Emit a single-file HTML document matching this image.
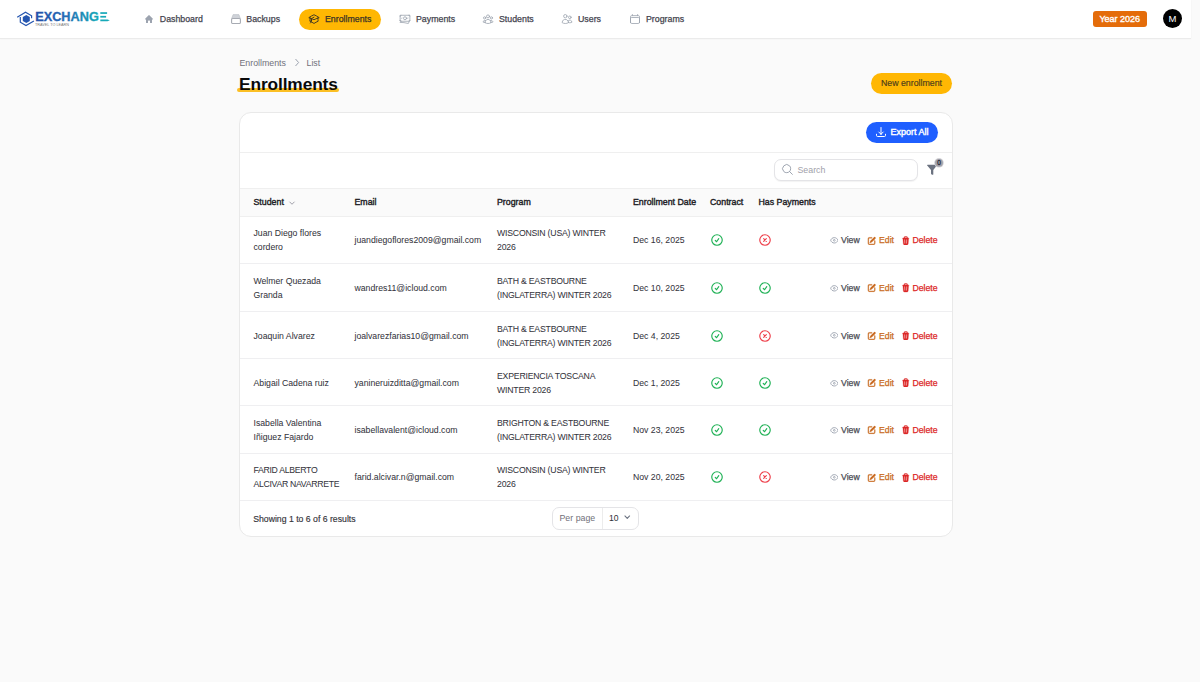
<!DOCTYPE html>
<html><head><meta charset="utf-8">
<style>
*{box-sizing:border-box;margin:0;padding:0}
html,body{width:1200px;height:682px;overflow:hidden}
body{background:#fafafa;font-family:"Liberation Sans",sans-serif;position:relative;color:#18181b}
.abs{position:absolute}
.ic{position:absolute}
#top{position:absolute;left:0;top:0;width:1191px;height:39px;background:#fff;border-bottom:1px solid #ebebeb;box-shadow:0 0 2px rgba(0,0,0,0.04)}
.nav{position:absolute;top:8px;height:22px;font-size:8.8px;font-weight:normal;color:#45454f;white-space:nowrap;line-height:22px;-webkit-text-stroke:0.25px currentColor}
.nt{position:absolute;top:0}
.nav svg{position:absolute}
.card{position:absolute;left:239px;top:112px;width:714px;height:425px;background:#fff;border:1px solid #e9e9e9;border-radius:12px;overflow:hidden}
.hl{position:absolute;left:240px;width:712px;height:1px;background:#efefef}
.hl2{position:absolute;left:240px;width:712px;height:1px;background:#efeff1}
.t{position:absolute;white-space:nowrap;font-size:9px;color:#3f3f46}
.th{position:absolute;top:188px;height:28px;line-height:28px;white-space:nowrap;font-size:8.8px;font-weight:normal;color:#202024;-webkit-text-stroke:0.38px currentColor}
.td{position:absolute;display:flex;flex-direction:column;justify-content:center;white-space:nowrap;font-size:8.7px;line-height:14px;color:#34343c;-webkit-text-stroke:0.04px currentColor}
.act{position:absolute;display:flex;align-items:center;white-space:nowrap;font-size:8.7px;font-weight:normal;color:#52525b;-webkit-text-stroke:0.25px currentColor}
</style></head><body>
<div id="top">
  <!-- logo -->
  <svg class="abs" style="left:16px;top:11px" width="19" height="16" viewBox="0 0 19 16">
    <path d="M1.2 6.3 L9.5 1.3 L15.6 4.8 L15.6 7.3" fill="none" stroke="#2556b0" stroke-width="1.2"/>
    <path d="M4.3 6 L4.3 11.2 L10 14.6 L17.9 9.9" fill="none" stroke="#2556b0" stroke-width="1.2"/>
    <polygon points="10.3,3.9 13.8,5.9 13.8,9.9 10.3,11.9 6.8,9.9 6.8,5.9" fill="#2556b0"/>
  </svg>
  <svg class="abs" style="left:34px;top:10px" width="80" height="18" viewBox="0 0 80 18">
    <defs><linearGradient id="lg" x1="0" x2="1" y1="0" y2="0"><stop offset="0" stop-color="#2350aa"/><stop offset="0.45" stop-color="#2669b4"/><stop offset="1" stop-color="#17aab8"/></linearGradient></defs>
    <text x="1.2" y="11.2" font-family="Liberation Sans" font-weight="bold" font-size="12.4" fill="url(#lg)" stroke="url(#lg)" stroke-width="0.3" textLength="63.6" lengthAdjust="spacingAndGlyphs">EXCHANG</text>
    <rect x="66.3" y="2.2" width="6.8" height="1.7" fill="#17a9b8"/>
    <rect x="66.3" y="5.9" width="5.8" height="1.7" fill="#17a9b8"/>
    <path d="M66.3 9.5 H73.5 L75.8 10.35 L73.5 11.2 H66.3 Z" fill="#17a9b8"/>
    <text x="1" y="15.6" font-family="Liberation Sans" font-size="3" fill="#777" textLength="34" lengthAdjust="spacingAndGlyphs">TRAVEL TO LEARN</text>
  </svg>

  <div class="nav" style="left:144px"><svg style="left:-0.5px;top:6.3px" width="10" height="10" viewBox="0 0 20 20"><path d="M9.293 2.293a1 1 0 011.414 0l7 7A1 1 0 0117 11h-1v6a1 1 0 01-1 1h-2a1 1 0 01-1-1v-3a1 1 0 00-1-1H9a1 1 0 00-1 1v3a1 1 0 01-1 1H5a1 1 0 01-1-1v-6H3a1 1 0 01-.707-1.707l7-7z" fill="#9ca3af"/></svg><span class="nt" style="left:15.8px">Dashboard</span></div>
  <div class="nav" style="left:231px"><svg style="left:0;top:6px" width="10" height="10" viewBox="0 0 10 10"><path d="M2.1 0.6 H7.9 L9.4 4.6 H0.6 Z" fill="#cfd2d8" stroke="#b9bdc5" stroke-width="0.6" stroke-linejoin="round"/><rect x="0.6" y="4.5" width="8.8" height="5" rx="1.1" fill="#fff" stroke="#a7abb3" stroke-width="1.1"/></svg><span class="nt" style="left:15.3px">Backups</span></div>
  <div class="nav" style="left:299px;width:82px;height:21.5px;top:8.5px;line-height:21.5px;background:#ffb703;border-radius:11px;color:#3a3326"><svg style="left:9px;top:4.5px" width="12" height="12" viewBox="0 0 24 24"><path d="M4.26 10.147a60.438 60.438 0 0 0-.491 6.347A48.62 48.62 0 0 1 12 20.904a48.62 48.62 0 0 1 8.232-4.41 60.46 60.46 0 0 0-.491-6.347m-15.482 0a50.636 50.636 0 0 0-2.658-.813A59.906 59.906 0 0 1 12 3.493a59.903 59.903 0 0 1 10.399 5.84c-.896.248-1.783.52-2.658.814m-15.482 0A50.717 50.717 0 0 1 12 13.489a50.702 50.702 0 0 1 7.74-3.342M6.75 15a.75.75 0 1 0 0-1.5.75.75 0 0 0 0 1.5Zm0 0v-3.675A55.378 55.378 0 0 1 12 8.443m-7.007 11.55A5.981 5.981 0 0 0 6.75 15.75v-1.5" fill="none" stroke="#3a3326" stroke-width="1.8" stroke-linecap="round" stroke-linejoin="round"/></svg><span class="nt" style="left:26px">Enrollments</span></div>
  <div class="nav" style="left:400px"><svg style="left:-1px;top:5.3px" width="12" height="12" viewBox="0 0 24 24"><path d="M2.25 18.75a60.07 60.07 0 0 1 15.797 2.101c.727.198 1.453-.342 1.453-1.096V18.75M3.75 4.5v.75A.75.75 0 0 1 3 6h-.75m0 0v-.375c0-.621.504-1.125 1.125-1.125H20.25M2.25 6v9m18-10.5v.75c0 .414.336.75.75.75h.75m-1.5-1.5h.375c.621 0 1.125.504 1.125 1.125v9.750c0 .621-.504 1.125-1.125 1.125h-.375m1.5-1.5H21a.75.75 0 0 0-.75.75v.75m0 0H3.75m0 0h-.375a1.125 1.125 0 0 1-1.125-1.125V15m1.5 1.5v-.75A.75.75 0 0 0 3 15h-.75M15 10.5a3 3 0 1 1-6 0 3 3 0 0 1 6 0Zm3 0h.008v.008H18V10.5Zm-12 0h.008v.008H6V10.5Z" fill="none" stroke="#9ca3af" stroke-width="1.6" stroke-linecap="round" stroke-linejoin="round"/></svg><span class="nt" style="left:16px">Payments</span></div>
  <div class="nav" style="left:483px"><svg style="left:-1px;top:5.3px" width="12" height="12" viewBox="0 0 24 24"><path d="M18 18.72a9.094 9.094 0 0 0 3.741-.479 3 3 0 0 0-4.682-2.72m.94 3.198.001.031c0 .225-.012.447-.037.666A11.944 11.944 0 0 1 12 21c-2.17 0-4.207-.576-5.963-1.584A6.062 6.062 0 0 1 6 18.719m12 0a5.971 5.971 0 0 0-.941-3.197m0 0A5.995 5.995 0 0 0 12 12.75a5.995 5.995 0 0 0-5.058 2.772m0 0a3 3 0 0 0-4.681 2.72 8.986 8.986 0 0 0 3.74.477m.94-3.197a5.971 5.971 0 0 0-.94 3.197M15 6.75a3 3 0 1 1-6 0 3 3 0 0 1 6 0Zm6 3a2.25 2.25 0 1 1-4.5 0 2.25 2.25 0 0 1 4.5 0Zm-13.5 0a2.25 2.25 0 1 1-4.5 0 2.25 2.25 0 0 1 4.5 0Z" fill="none" stroke="#9ca3af" stroke-width="1.6" stroke-linecap="round" stroke-linejoin="round"/></svg><span class="nt" style="left:16px">Students</span></div>
  <div class="nav" style="left:562px"><svg style="left:-1px;top:5.3px" width="12" height="12" viewBox="0 0 24 24"><path d="M15 19.128a9.38 9.38 0 0 0 2.625.372 9.337 9.337 0 0 0 4.121-.952 4.125 4.125 0 0 0-7.533-2.493M15 19.128v-.003c0-1.113-.285-2.16-.786-3.07M15 19.128v.106A12.318 12.318 0 0 1 8.624 21c-2.331 0-4.512-.645-6.374-1.766l-.001-.109a6.375 6.375 0 0 1 11.964-3.07M12 6.375a3.375 3.375 0 1 1-6.75 0 3.375 3.375 0 0 1 6.75 0Zm8.25 2.25a2.625 2.625 0 1 1-5.25 0 2.625 2.625 0 0 1 5.250 0Z" fill="none" stroke="#9ca3af" stroke-width="1.6" stroke-linecap="round" stroke-linejoin="round"/></svg><span class="nt" style="left:16px">Users</span></div>
  <div class="nav" style="left:630px"><svg style="left:-1px;top:5.3px" width="12" height="12" viewBox="0 0 24 24"><path d="M6.75 3v2.25M17.25 3v2.25M3 18.75V7.5a2.25 2.25 0 0 1 2.25-2.25h13.5A2.25 2.25 0 0 1 21 7.5v11.25m-18 0A2.25 2.25 0 0 0 5.25 21h13.5A2.25 2.25 0 0 0 21 18.75m-18 0v-7.5A2.25 2.25 0 0 1 5.25 9h13.5A2.25 2.25 0 0 1 21 11.25v7.5" fill="none" stroke="#9ca3af" stroke-width="1.6" stroke-linecap="round" stroke-linejoin="round"/></svg><span class="nt" style="left:16px">Programs</span></div>

  <div class="abs" style="left:1092.5px;top:11px;width:54.5px;height:16.3px;background:#e46c0a;border-radius:3px;color:#fff;font-size:9px;font-weight:normal;-webkit-text-stroke:0.35px #fff;text-align:center;line-height:16.3px">Year 2026</div>
  <div class="abs" style="left:1163px;top:9.2px;width:19px;height:19px;background:#000;border-radius:50%;color:#fff;font-size:9.5px;text-align:center;line-height:19.5px">M</div>
</div>

<!-- breadcrumbs -->
<div class="t" style="left:239.5px;top:56.5px;font-size:8.8px;color:#71717a;line-height:12px">Enrollments</div>
<svg class="abs" style="left:293.5px;top:58px" width="6" height="9" viewBox="0 0 6 9"><path d="M1.5 1 L4.6 4.5 L1.5 8" fill="none" stroke="#9ca3af" stroke-width="1"/></svg>
<div class="t" style="left:306.5px;top:56.5px;font-size:8.8px;color:#71717a;line-height:12px">List</div>
<div class="abs" style="left:237px;top:88.3px;width:102px;height:3.4px;background:#fbbf24;border-radius:2px"></div>
<div class="abs" style="left:239px;top:72.8px;font-size:17.3px;line-height:22px;font-weight:bold;color:#09090b;white-space:nowrap;letter-spacing:-0.1px">Enrollments</div>

<div class="abs" style="left:871px;top:72.5px;width:81px;height:21.5px;background:#ffb703;border-radius:11px;font-size:8.8px;color:#4a3c1c;-webkit-text-stroke:0.15px currentColor;text-align:center;line-height:21.5px">New enrollment</div>

<div class="card"></div>
<div class="abs" style="left:866px;top:121.5px;width:72px;height:21.3px;background:#1f5fff;border-radius:11px;color:#fff;font-size:9px;font-weight:normal;-webkit-text-stroke:0.4px #fff;line-height:21.3px;padding-left:24.5px">Export All</div>
<svg class="abs" style="left:874.8px;top:126.3px" width="12" height="12" viewBox="0 0 24 24"><path d="M3 16.5v2.25A2.25 2.25 0 0 0 5.25 21h13.5A2.25 2.25 0 0 0 21 18.75V16.5M16.5 12 12 16.5m0 0L7.5 12m4.5 4.5V3" fill="none" stroke="#fff" stroke-width="2" stroke-linecap="round" stroke-linejoin="round"/></svg>
<div class="hl" style="top:152px"></div>
<div class="abs" style="left:774px;top:159px;width:143.5px;height:22.3px;border:1px solid #e4e4e7;border-radius:7px;background:#fff;box-shadow:0 1px 1px rgba(0,0,0,0.05)"></div>
<svg class="abs" style="left:780.5px;top:163.3px" width="13" height="13" viewBox="0 0 24 24"><path d="m21 21-5.197-5.197m0 0A7.5 7.5 0 1 0 5.196 5.196a7.5 7.5 0 0 0 10.607 10.607Z" fill="none" stroke="#9ca3af" stroke-width="1.8" stroke-linecap="round" stroke-linejoin="round"/></svg>
<div class="t" style="left:797.5px;top:164px;font-size:8.8px;line-height:12px;color:#a1a1aa">Search</div>
<svg class="abs" style="left:925px;top:156px" width="22" height="22" viewBox="0 0 22 22"><path d="M2 9.3 Q2 8.8 2.6 8.8 H11.4 Q12 8.8 12 9.3 L8.3 14 L8.3 18.2 Q8.3 19 7.3 18.8 L6.6 18.5 Q6 18.2 6 17.5 L6 14 Z" fill="#6b7280"/><circle cx="14" cy="6.8" r="4.8" fill="#d4d4d8"/><circle cx="14" cy="6.8" r="3.9" fill="#a1a1aa"/><text x="14" y="9.1" text-anchor="middle" font-family="Liberation Sans" font-size="6.4" font-weight="normal" stroke="#1f2937" stroke-width="0.3" fill="#1f2937">0</text></svg>
<div class="hl" style="top:187.5px"></div>
<div class="abs" style="left:240px;top:188.5px;width:712px;height:27.5px;background:#fafafa"></div>
<div class="hl" style="top:215.5px"></div>

<div class="th" style="left:253.5px">Student</div>
<svg class="abs" style="left:287.3px;top:197.6px" width="10" height="10" viewBox="0 0 20 20"><path d="M5.5 8 L10 12.5 L14.5 8" fill="none" stroke="#a1a1aa" stroke-width="2" stroke-linecap="round" stroke-linejoin="round"/></svg>
<div class="th" style="left:354.5px">Email</div>
<div class="th" style="left:497px">Program</div>
<div class="th" style="left:633px">Enrollment Date</div>
<div class="th" style="left:710px">Contract</div>
<div class="th" style="left:758.5px">Has Payments</div>

<div class="hl2" style="top:263.30px"></div>
<div class="td" style="left:253.5px;top:216.5px;height:47.80000000000001px">Juan Diego flores<br>cordero</div>
<div class="td" style="left:354.5px;top:216.5px;height:47.80000000000001px">juandiegoflores2009@gmail.com</div>
<div class="td" style="left:497px;top:216.5px;letter-spacing:-0.2px;height:47.80000000000001px">WISCONSIN (USA) WINTER<br>2026</div>
<div class="td" style="left:633px;top:216.5px;height:47.80000000000001px">Dec 16, 2025</div>
<svg class="ic" style="left:709.8px;top:233.40px" width="14" height="14" viewBox="0 0 24 24"><path d="M9 12.75 11.25 15 15 9.75M21 12a9 9 0 1 1-18 0 9 9 0 0 1 18 0Z" fill="none" stroke="#1fb155" stroke-width="2" stroke-linecap="round" stroke-linejoin="round"/></svg>
<svg class="ic" style="left:758.3px;top:233.40px" width="14" height="14" viewBox="0 0 24 24"><path d="m9.75 9.75 4.5 4.5m0-4.5-4.5 4.5M21 12a9 9 0 1 1-18 0 9 9 0 0 1 18 0Z" fill="none" stroke="#ee3f4a" stroke-width="2" stroke-linecap="round" stroke-linejoin="round"/></svg>
<svg class="ic" style="left:829.7px;top:236.20px" width="8.6" height="8.6" viewBox="0 0 24 24"><path d="M2.036 12.322a1.012 1.012 0 0 1 0-.639C3.423 7.51 7.36 4.5 12 4.5c4.638 0 8.573 3.007 9.963 7.178.07.207.07.431 0 .639C20.577 16.49 16.64 19.5 12 19.5c-4.638 0-8.573-3.007-9.963-7.178Z" fill="none" stroke="#9ca3af" stroke-width="2.6"/><circle cx="12" cy="12" r="2.4" fill="none" stroke="#9ca3af" stroke-width="2.4"/></svg>
<div class="act" style="left:841px;top:216.5px;height:47.80000000000001px;color:#4b4b53">View</div>
<svg class="ic" style="left:867.2px;top:235.50px" width="9.6" height="9.6" viewBox="0 0 20 20"><path d="M5.433 13.917l1.262-3.155A4 4 0 017.58 9.42l6.92-6.918a2.121 2.121 0 013 3l-6.92 6.918c-.383.383-.84.685-1.343.886l-3.154 1.262a.5.5 0 01-.65-.65z" fill="#c96b22"/><path d="M3.5 5.75c0-.69.56-1.25 1.25-1.25H10A.75.75 0 0010 3H4.75A2.75 2.75 0 002 5.75v9.5A2.75 2.75 0 004.75 18h9.5A2.75 2.75 0 0017 15.250V10a.75.75 0 00-1.5 0v5.25c0 .69-.56 1.25-1.25 1.25h-9.5c-.69 0-1.25-.56-1.25-1.25v-9.5z" fill="#c96b22" stroke="#c96b22" stroke-width="0.8"/></svg>
<div class="act" style="left:879px;top:216.5px;height:47.80000000000001px;color:#c96b22">Edit</div>
<svg class="ic" style="left:901.3px;top:235.60px" width="9.5" height="9.5" viewBox="0 0 20 20"><path fill="#dc2626" stroke="#dc2626" stroke-width="0.6" fill-rule="evenodd" d="M8.75 1A2.75 2.75 0 006 3.75v.443c-.795.077-1.584.176-2.365.298a.75.75 0 10.23 1.482l.149-.022.841 10.518A2.75 2.75 0 007.596 19h4.807a2.75 2.75 0 002.742-2.53l.841-10.52.149.023a.75.75 0 00.23-1.482A41.03 41.03 0 0014 4.193V3.75A2.75 2.75 0 0011.25 1h-2.5zM10 4c.84 0 1.673.025 2.5.075V3.75c0-.69-.56-1.25-1.25-1.25h-2.5c-.69 0-1.25.56-1.25 1.25v.325C8.327 4.025 9.16 4 10 4zM8.58 7.72a.75.75 0 00-1.5.06l.3 7.5a.75.75 0 101.5-.06l-.3-7.5zm4.34.06a.75.75 0 10-1.5-.06l-.3 7.5a.75.75 0 101.5.06l.3-7.5z" clip-rule="evenodd"/></svg>
<div class="act" style="left:912.5px;top:216.5px;height:47.80000000000001px;color:#dc2626">Delete</div>
<div class="hl2" style="top:311.00px"></div>
<div class="td" style="left:253.5px;top:264.3px;height:47.69999999999999px">Welmer Quezada<br>Granda</div>
<div class="td" style="left:354.5px;top:264.3px;height:47.69999999999999px">wandres11@icloud.com</div>
<div class="td" style="left:497px;top:264.3px;letter-spacing:-0.2px;height:47.69999999999999px">BATH &amp; EASTBOURNE<br>(INGLATERRA) WINTER 2026</div>
<div class="td" style="left:633px;top:264.3px;height:47.69999999999999px">Dec 10, 2025</div>
<svg class="ic" style="left:709.8px;top:281.15px" width="14" height="14" viewBox="0 0 24 24"><path d="M9 12.75 11.25 15 15 9.75M21 12a9 9 0 1 1-18 0 9 9 0 0 1 18 0Z" fill="none" stroke="#1fb155" stroke-width="2" stroke-linecap="round" stroke-linejoin="round"/></svg>
<svg class="ic" style="left:758.3px;top:281.15px" width="14" height="14" viewBox="0 0 24 24"><path d="M9 12.75 11.25 15 15 9.75M21 12a9 9 0 1 1-18 0 9 9 0 0 1 18 0Z" fill="none" stroke="#1fb155" stroke-width="2" stroke-linecap="round" stroke-linejoin="round"/></svg>
<svg class="ic" style="left:829.7px;top:283.95px" width="8.6" height="8.6" viewBox="0 0 24 24"><path d="M2.036 12.322a1.012 1.012 0 0 1 0-.639C3.423 7.51 7.36 4.5 12 4.5c4.638 0 8.573 3.007 9.963 7.178.07.207.07.431 0 .639C20.577 16.49 16.64 19.5 12 19.5c-4.638 0-8.573-3.007-9.963-7.178Z" fill="none" stroke="#9ca3af" stroke-width="2.6"/><circle cx="12" cy="12" r="2.4" fill="none" stroke="#9ca3af" stroke-width="2.4"/></svg>
<div class="act" style="left:841px;top:264.3px;height:47.69999999999999px;color:#4b4b53">View</div>
<svg class="ic" style="left:867.2px;top:283.25px" width="9.6" height="9.6" viewBox="0 0 20 20"><path d="M5.433 13.917l1.262-3.155A4 4 0 017.58 9.42l6.92-6.918a2.121 2.121 0 013 3l-6.92 6.918c-.383.383-.84.685-1.343.886l-3.154 1.262a.5.5 0 01-.65-.65z" fill="#c96b22"/><path d="M3.5 5.75c0-.69.56-1.25 1.25-1.25H10A.75.75 0 0010 3H4.75A2.75 2.75 0 002 5.75v9.5A2.75 2.75 0 004.75 18h9.5A2.75 2.75 0 0017 15.250V10a.75.75 0 00-1.5 0v5.25c0 .69-.56 1.25-1.25 1.25h-9.5c-.69 0-1.25-.56-1.25-1.25v-9.5z" fill="#c96b22" stroke="#c96b22" stroke-width="0.8"/></svg>
<div class="act" style="left:879px;top:264.3px;height:47.69999999999999px;color:#c96b22">Edit</div>
<svg class="ic" style="left:901.3px;top:283.35px" width="9.5" height="9.5" viewBox="0 0 20 20"><path fill="#dc2626" stroke="#dc2626" stroke-width="0.6" fill-rule="evenodd" d="M8.75 1A2.75 2.75 0 006 3.75v.443c-.795.077-1.584.176-2.365.298a.75.75 0 10.23 1.482l.149-.022.841 10.518A2.75 2.75 0 007.596 19h4.807a2.75 2.75 0 002.742-2.53l.841-10.52.149.023a.75.75 0 00.23-1.482A41.03 41.03 0 0014 4.193V3.75A2.75 2.75 0 0011.25 1h-2.5zM10 4c.84 0 1.673.025 2.5.075V3.75c0-.69-.56-1.25-1.25-1.25h-2.5c-.69 0-1.25.56-1.25 1.25v.325C8.327 4.025 9.16 4 10 4zM8.58 7.72a.75.75 0 00-1.5.06l.3 7.5a.75.75 0 101.5-.06l-.3-7.5zm4.34.06a.75.75 0 10-1.5-.06l-.3 7.5a.75.75 0 101.5.06l.3-7.5z" clip-rule="evenodd"/></svg>
<div class="act" style="left:912.5px;top:264.3px;height:47.69999999999999px;color:#dc2626">Delete</div>
<div class="hl2" style="top:358.00px"></div>
<div class="td" style="left:253.5px;top:312.0px;height:47.0px">Joaquin Alvarez</div>
<div class="td" style="left:354.5px;top:312.0px;height:47.0px">joalvarezfarias10@gmail.com</div>
<div class="td" style="left:497px;top:312.0px;letter-spacing:-0.2px;height:47.0px">BATH &amp; EASTBOURNE<br>(INGLATERRA) WINTER 2026</div>
<div class="td" style="left:633px;top:312.0px;height:47.0px">Dec 4, 2025</div>
<svg class="ic" style="left:709.8px;top:328.50px" width="14" height="14" viewBox="0 0 24 24"><path d="M9 12.75 11.25 15 15 9.75M21 12a9 9 0 1 1-18 0 9 9 0 0 1 18 0Z" fill="none" stroke="#1fb155" stroke-width="2" stroke-linecap="round" stroke-linejoin="round"/></svg>
<svg class="ic" style="left:758.3px;top:328.50px" width="14" height="14" viewBox="0 0 24 24"><path d="m9.75 9.75 4.5 4.5m0-4.5-4.5 4.5M21 12a9 9 0 1 1-18 0 9 9 0 0 1 18 0Z" fill="none" stroke="#ee3f4a" stroke-width="2" stroke-linecap="round" stroke-linejoin="round"/></svg>
<svg class="ic" style="left:829.7px;top:331.30px" width="8.6" height="8.6" viewBox="0 0 24 24"><path d="M2.036 12.322a1.012 1.012 0 0 1 0-.639C3.423 7.51 7.36 4.5 12 4.5c4.638 0 8.573 3.007 9.963 7.178.07.207.07.431 0 .639C20.577 16.49 16.64 19.5 12 19.5c-4.638 0-8.573-3.007-9.963-7.178Z" fill="none" stroke="#9ca3af" stroke-width="2.6"/><circle cx="12" cy="12" r="2.4" fill="none" stroke="#9ca3af" stroke-width="2.4"/></svg>
<div class="act" style="left:841px;top:312.0px;height:47.0px;color:#4b4b53">View</div>
<svg class="ic" style="left:867.2px;top:330.60px" width="9.6" height="9.6" viewBox="0 0 20 20"><path d="M5.433 13.917l1.262-3.155A4 4 0 017.58 9.42l6.92-6.918a2.121 2.121 0 013 3l-6.92 6.918c-.383.383-.84.685-1.343.886l-3.154 1.262a.5.5 0 01-.65-.65z" fill="#c96b22"/><path d="M3.5 5.75c0-.69.56-1.25 1.25-1.25H10A.75.75 0 0010 3H4.75A2.75 2.75 0 002 5.75v9.5A2.75 2.75 0 004.75 18h9.5A2.75 2.75 0 0017 15.250V10a.75.75 0 00-1.5 0v5.25c0 .69-.56 1.25-1.25 1.25h-9.5c-.69 0-1.25-.56-1.25-1.25v-9.5z" fill="#c96b22" stroke="#c96b22" stroke-width="0.8"/></svg>
<div class="act" style="left:879px;top:312.0px;height:47.0px;color:#c96b22">Edit</div>
<svg class="ic" style="left:901.3px;top:330.70px" width="9.5" height="9.5" viewBox="0 0 20 20"><path fill="#dc2626" stroke="#dc2626" stroke-width="0.6" fill-rule="evenodd" d="M8.75 1A2.75 2.75 0 006 3.75v.443c-.795.077-1.584.176-2.365.298a.75.75 0 10.23 1.482l.149-.022.841 10.518A2.75 2.75 0 007.596 19h4.807a2.75 2.75 0 002.742-2.53l.841-10.52.149.023a.75.75 0 00.23-1.482A41.03 41.03 0 0014 4.193V3.75A2.75 2.75 0 0011.25 1h-2.5zM10 4c.84 0 1.673.025 2.5.075V3.75c0-.69-.56-1.25-1.25-1.25h-2.5c-.69 0-1.25.56-1.25 1.25v.325C8.327 4.025 9.16 4 10 4zM8.58 7.72a.75.75 0 00-1.5.06l.3 7.5a.75.75 0 101.5-.06l-.3-7.5zm4.34.06a.75.75 0 10-1.5-.06l-.3 7.5a.75.75 0 101.5.06l.3-7.5z" clip-rule="evenodd"/></svg>
<div class="act" style="left:912.5px;top:312.0px;height:47.0px;color:#dc2626">Delete</div>
<div class="hl2" style="top:405.40px"></div>
<div class="td" style="left:253.5px;top:359.0px;height:47.39999999999998px">Abigail Cadena ruiz</div>
<div class="td" style="left:354.5px;top:359.0px;height:47.39999999999998px">yanineruizditta@gmail.com</div>
<div class="td" style="left:497px;top:359.0px;letter-spacing:-0.2px;height:47.39999999999998px">EXPERIENCIA TOSCANA<br>WINTER 2026</div>
<div class="td" style="left:633px;top:359.0px;height:47.39999999999998px">Dec 1, 2025</div>
<svg class="ic" style="left:709.8px;top:375.70px" width="14" height="14" viewBox="0 0 24 24"><path d="M9 12.75 11.25 15 15 9.75M21 12a9 9 0 1 1-18 0 9 9 0 0 1 18 0Z" fill="none" stroke="#1fb155" stroke-width="2" stroke-linecap="round" stroke-linejoin="round"/></svg>
<svg class="ic" style="left:758.3px;top:375.70px" width="14" height="14" viewBox="0 0 24 24"><path d="M9 12.75 11.25 15 15 9.75M21 12a9 9 0 1 1-18 0 9 9 0 0 1 18 0Z" fill="none" stroke="#1fb155" stroke-width="2" stroke-linecap="round" stroke-linejoin="round"/></svg>
<svg class="ic" style="left:829.7px;top:378.50px" width="8.6" height="8.6" viewBox="0 0 24 24"><path d="M2.036 12.322a1.012 1.012 0 0 1 0-.639C3.423 7.51 7.36 4.5 12 4.5c4.638 0 8.573 3.007 9.963 7.178.07.207.07.431 0 .639C20.577 16.49 16.64 19.5 12 19.5c-4.638 0-8.573-3.007-9.963-7.178Z" fill="none" stroke="#9ca3af" stroke-width="2.6"/><circle cx="12" cy="12" r="2.4" fill="none" stroke="#9ca3af" stroke-width="2.4"/></svg>
<div class="act" style="left:841px;top:359.0px;height:47.39999999999998px;color:#4b4b53">View</div>
<svg class="ic" style="left:867.2px;top:377.80px" width="9.6" height="9.6" viewBox="0 0 20 20"><path d="M5.433 13.917l1.262-3.155A4 4 0 017.58 9.42l6.92-6.918a2.121 2.121 0 013 3l-6.92 6.918c-.383.383-.84.685-1.343.886l-3.154 1.262a.5.5 0 01-.65-.65z" fill="#c96b22"/><path d="M3.5 5.75c0-.69.56-1.25 1.25-1.25H10A.75.75 0 0010 3H4.75A2.75 2.75 0 002 5.75v9.5A2.75 2.75 0 004.75 18h9.5A2.75 2.75 0 0017 15.250V10a.75.75 0 00-1.5 0v5.25c0 .69-.56 1.25-1.25 1.25h-9.5c-.69 0-1.25-.56-1.25-1.25v-9.5z" fill="#c96b22" stroke="#c96b22" stroke-width="0.8"/></svg>
<div class="act" style="left:879px;top:359.0px;height:47.39999999999998px;color:#c96b22">Edit</div>
<svg class="ic" style="left:901.3px;top:377.90px" width="9.5" height="9.5" viewBox="0 0 20 20"><path fill="#dc2626" stroke="#dc2626" stroke-width="0.6" fill-rule="evenodd" d="M8.75 1A2.75 2.75 0 006 3.75v.443c-.795.077-1.584.176-2.365.298a.75.75 0 10.23 1.482l.149-.022.841 10.518A2.75 2.75 0 007.596 19h4.807a2.75 2.75 0 002.742-2.53l.841-10.52.149.023a.75.75 0 00.23-1.482A41.03 41.03 0 0014 4.193V3.75A2.75 2.75 0 0011.25 1h-2.5zM10 4c.84 0 1.673.025 2.5.075V3.75c0-.69-.56-1.25-1.25-1.25h-2.5c-.69 0-1.25.56-1.25 1.25v.325C8.327 4.025 9.16 4 10 4zM8.58 7.72a.75.75 0 00-1.5.06l.3 7.5a.75.75 0 101.5-.06l-.3-7.5zm4.34.06a.75.75 0 10-1.5-.06l-.3 7.5a.75.75 0 101.5.06l.3-7.5z" clip-rule="evenodd"/></svg>
<div class="act" style="left:912.5px;top:359.0px;height:47.39999999999998px;color:#dc2626">Delete</div>
<div class="hl2" style="top:452.90px"></div>
<div class="td" style="left:253.5px;top:406.4px;height:47.5px">Isabella Valentina<br>Iñiguez Fajardo</div>
<div class="td" style="left:354.5px;top:406.4px;height:47.5px">isabellavalent@icloud.com</div>
<div class="td" style="left:497px;top:406.4px;letter-spacing:-0.2px;height:47.5px">BRIGHTON &amp; EASTBOURNE<br>(INGLATERRA) WINTER 2026</div>
<div class="td" style="left:633px;top:406.4px;height:47.5px">Nov 23, 2025</div>
<svg class="ic" style="left:709.8px;top:423.15px" width="14" height="14" viewBox="0 0 24 24"><path d="M9 12.75 11.25 15 15 9.75M21 12a9 9 0 1 1-18 0 9 9 0 0 1 18 0Z" fill="none" stroke="#1fb155" stroke-width="2" stroke-linecap="round" stroke-linejoin="round"/></svg>
<svg class="ic" style="left:758.3px;top:423.15px" width="14" height="14" viewBox="0 0 24 24"><path d="M9 12.75 11.25 15 15 9.75M21 12a9 9 0 1 1-18 0 9 9 0 0 1 18 0Z" fill="none" stroke="#1fb155" stroke-width="2" stroke-linecap="round" stroke-linejoin="round"/></svg>
<svg class="ic" style="left:829.7px;top:425.95px" width="8.6" height="8.6" viewBox="0 0 24 24"><path d="M2.036 12.322a1.012 1.012 0 0 1 0-.639C3.423 7.51 7.36 4.5 12 4.5c4.638 0 8.573 3.007 9.963 7.178.07.207.07.431 0 .639C20.577 16.49 16.64 19.5 12 19.5c-4.638 0-8.573-3.007-9.963-7.178Z" fill="none" stroke="#9ca3af" stroke-width="2.6"/><circle cx="12" cy="12" r="2.4" fill="none" stroke="#9ca3af" stroke-width="2.4"/></svg>
<div class="act" style="left:841px;top:406.4px;height:47.5px;color:#4b4b53">View</div>
<svg class="ic" style="left:867.2px;top:425.25px" width="9.6" height="9.6" viewBox="0 0 20 20"><path d="M5.433 13.917l1.262-3.155A4 4 0 017.58 9.42l6.92-6.918a2.121 2.121 0 013 3l-6.92 6.918c-.383.383-.84.685-1.343.886l-3.154 1.262a.5.5 0 01-.65-.65z" fill="#c96b22"/><path d="M3.5 5.75c0-.69.56-1.25 1.25-1.25H10A.75.75 0 0010 3H4.75A2.75 2.75 0 002 5.75v9.5A2.75 2.75 0 004.75 18h9.5A2.75 2.75 0 0017 15.250V10a.75.75 0 00-1.5 0v5.25c0 .69-.56 1.25-1.25 1.25h-9.5c-.69 0-1.25-.56-1.25-1.25v-9.5z" fill="#c96b22" stroke="#c96b22" stroke-width="0.8"/></svg>
<div class="act" style="left:879px;top:406.4px;height:47.5px;color:#c96b22">Edit</div>
<svg class="ic" style="left:901.3px;top:425.35px" width="9.5" height="9.5" viewBox="0 0 20 20"><path fill="#dc2626" stroke="#dc2626" stroke-width="0.6" fill-rule="evenodd" d="M8.75 1A2.75 2.75 0 006 3.75v.443c-.795.077-1.584.176-2.365.298a.75.75 0 10.23 1.482l.149-.022.841 10.518A2.75 2.75 0 007.596 19h4.807a2.75 2.75 0 002.742-2.53l.841-10.52.149.023a.75.75 0 00.23-1.482A41.03 41.03 0 0014 4.193V3.75A2.75 2.75 0 0011.25 1h-2.5zM10 4c.84 0 1.673.025 2.5.075V3.75c0-.69-.56-1.25-1.25-1.25h-2.5c-.69 0-1.25.56-1.25 1.25v.325C8.327 4.025 9.16 4 10 4zM8.58 7.72a.75.75 0 00-1.5.06l.3 7.5a.75.75 0 101.5-.06l-.3-7.5zm4.34.06a.75.75 0 10-1.5-.06l-.3 7.5a.75.75 0 101.5.06l.3-7.5z" clip-rule="evenodd"/></svg>
<div class="act" style="left:912.5px;top:406.4px;height:47.5px;color:#dc2626">Delete</div>
<div class="hl2" style="top:500.00px"></div>
<div class="td" style="left:253.5px;top:453.9px;letter-spacing:-0.3px;height:47.10000000000002px">FARID ALBERTO<br>ALCIVAR NAVARRETE</div>
<div class="td" style="left:354.5px;top:453.9px;height:47.10000000000002px">farid.alcivar.n@gmail.com</div>
<div class="td" style="left:497px;top:453.9px;letter-spacing:-0.2px;height:47.10000000000002px">WISCONSIN (USA) WINTER<br>2026</div>
<div class="td" style="left:633px;top:453.9px;height:47.10000000000002px">Nov 20, 2025</div>
<svg class="ic" style="left:709.8px;top:470.45px" width="14" height="14" viewBox="0 0 24 24"><path d="M9 12.75 11.25 15 15 9.75M21 12a9 9 0 1 1-18 0 9 9 0 0 1 18 0Z" fill="none" stroke="#1fb155" stroke-width="2" stroke-linecap="round" stroke-linejoin="round"/></svg>
<svg class="ic" style="left:758.3px;top:470.45px" width="14" height="14" viewBox="0 0 24 24"><path d="m9.75 9.75 4.5 4.5m0-4.5-4.5 4.5M21 12a9 9 0 1 1-18 0 9 9 0 0 1 18 0Z" fill="none" stroke="#ee3f4a" stroke-width="2" stroke-linecap="round" stroke-linejoin="round"/></svg>
<svg class="ic" style="left:829.7px;top:473.25px" width="8.6" height="8.6" viewBox="0 0 24 24"><path d="M2.036 12.322a1.012 1.012 0 0 1 0-.639C3.423 7.51 7.36 4.5 12 4.5c4.638 0 8.573 3.007 9.963 7.178.07.207.07.431 0 .639C20.577 16.49 16.64 19.5 12 19.5c-4.638 0-8.573-3.007-9.963-7.178Z" fill="none" stroke="#9ca3af" stroke-width="2.6"/><circle cx="12" cy="12" r="2.4" fill="none" stroke="#9ca3af" stroke-width="2.4"/></svg>
<div class="act" style="left:841px;top:453.9px;height:47.10000000000002px;color:#4b4b53">View</div>
<svg class="ic" style="left:867.2px;top:472.55px" width="9.6" height="9.6" viewBox="0 0 20 20"><path d="M5.433 13.917l1.262-3.155A4 4 0 017.58 9.42l6.92-6.918a2.121 2.121 0 013 3l-6.92 6.918c-.383.383-.84.685-1.343.886l-3.154 1.262a.5.5 0 01-.65-.65z" fill="#c96b22"/><path d="M3.5 5.75c0-.69.56-1.25 1.25-1.25H10A.75.75 0 0010 3H4.75A2.75 2.75 0 002 5.75v9.5A2.75 2.75 0 004.75 18h9.5A2.75 2.75 0 0017 15.250V10a.75.75 0 00-1.5 0v5.25c0 .69-.56 1.25-1.25 1.25h-9.5c-.69 0-1.25-.56-1.25-1.25v-9.5z" fill="#c96b22" stroke="#c96b22" stroke-width="0.8"/></svg>
<div class="act" style="left:879px;top:453.9px;height:47.10000000000002px;color:#c96b22">Edit</div>
<svg class="ic" style="left:901.3px;top:472.65px" width="9.5" height="9.5" viewBox="0 0 20 20"><path fill="#dc2626" stroke="#dc2626" stroke-width="0.6" fill-rule="evenodd" d="M8.75 1A2.75 2.75 0 006 3.75v.443c-.795.077-1.584.176-2.365.298a.75.75 0 10.23 1.482l.149-.022.841 10.518A2.75 2.75 0 007.596 19h4.807a2.75 2.75 0 002.742-2.53l.841-10.52.149.023a.75.75 0 00.23-1.482A41.03 41.03 0 0014 4.193V3.75A2.75 2.75 0 0011.25 1h-2.5zM10 4c.84 0 1.673.025 2.5.075V3.75c0-.69-.56-1.25-1.25-1.25h-2.5c-.69 0-1.25.56-1.25 1.25v.325C8.327 4.025 9.16 4 10 4zM8.58 7.72a.75.75 0 00-1.5.06l.3 7.5a.75.75 0 101.5-.06l-.3-7.5zm4.34.06a.75.75 0 10-1.5-.06l-.3 7.5a.75.75 0 101.5.06l.3-7.5z" clip-rule="evenodd"/></svg>
<div class="act" style="left:912.5px;top:453.9px;height:47.10000000000002px;color:#dc2626">Delete</div>

<div class="t" style="left:253.2px;top:512.8px;font-size:8.7px;line-height:12px;color:#34343a;-webkit-text-stroke:0.15px currentColor">Showing 1 to 6 of 6 results</div>
<div class="abs" style="left:552px;top:507px;width:87px;height:23px;border:1px solid #e4e4e7;border-radius:7px;background:#fff"></div>
<div class="abs" style="left:602px;top:508px;width:1px;height:21px;background:#ececec"></div>
<div class="t" style="left:559.5px;top:512.3px;font-size:8.8px;line-height:12px;color:#71717a">Per page</div>
<div class="t" style="left:609px;top:511.8px;font-size:8.6px;line-height:12px;color:#303036">10</div>
<svg class="abs" style="left:622.8px;top:513.2px" width="8.5" height="8.5" viewBox="0 0 20 20"><path d="M4.5 7 L10 12.5 L15.5 7" fill="none" stroke="#6b7280" stroke-width="2.6" stroke-linecap="round" stroke-linejoin="round"/></svg>
</body></html>
